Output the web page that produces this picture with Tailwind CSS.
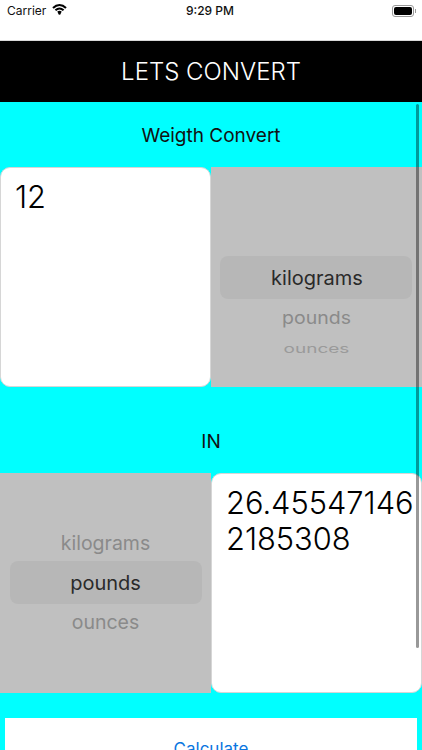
<!DOCTYPE html>
<html lang="en">

<head>
  <meta charset="UTF-8" />
  <meta name="viewport" content="width=device-width, initial-scale=1.0" />
  <title>Lets Convert</title>
  <script src="https://cdn.jsdelivr.net/npm/@tailwindcss/browser@4"></script>
</head>

<body class="bg-white font-['Inter',sans-serif] overflow-hidden">
  <div class="relative w-[422px] h-[750px] overflow-hidden bg-[#00ffff]">

    <!-- Status bar -->
    <div class="h-[41px] bg-white border-b border-[#d8d8d8]">
      <div class="relative flex items-center justify-between h-[21px] pl-[7px] pr-[6px]">
        <div class="flex items-center gap-[6px]">
          <span class="text-[12px] leading-none text-[#111]">Carrier</span>
          <svg class="w-[15px] h-[11px] -mt-[2px]" viewBox="0 0 15 11" fill="none" stroke="#000" stroke-width="2.1">
            <path d="M1 3.9C5 .2 10 .2 14 3.9" />
            <path d="M3.4 6.3c2.6-2.3 5.6-2.3 8.2 0" />
            <path d="M5.9 8.6c1-.9 2.2-.9 3.2 0" />
            <circle cx="7.5" cy="9.6" r="1.2" fill="#000" stroke="none" />
          </svg>
        </div>
        <span class="absolute left-[186px] text-[12px] font-medium leading-none text-[#111]">9:29 PM</span>
        <div class="flex items-center gap-px">
          <div class="w-[22px] h-[12px] rounded-[3px] border border-[#999] p-px">
            <div class="w-full h-full rounded-[2px] bg-black"></div>
          </div>
          <div class="w-px h-[4px] bg-[#999]"></div>
        </div>
      </div>
    </div>

    <!-- Title bar -->
    <div class="h-[61px] bg-black flex items-center justify-center">
      <h1 class="text-[24px] font-light leading-none text-white">LETS CONVERT</h1>
    </div>

    <h2 class="h-[65px] pt-[2px] flex items-center justify-center text-[19px] leading-none font-normal text-[#111]">Weigth Convert</h2>

    <!-- From row -->
    <div class="flex h-[220px]">
      <div class="w-[211px] h-full bg-white rounded-[10px] border border-[#d6d6d6] pl-[14px] pt-[11px] text-[30.8px] font-light leading-[36px] text-black">12</div>
      <div class="w-[211px] h-full bg-[#c0c0c0] flex flex-col items-center pt-[89px]">
        <div class="self-start ml-[9px] pl-[2px] w-[192px] h-[43px] shrink-0 rounded-[8px] bg-[#b7b7b7] flex items-center justify-center text-[20px] text-[#2a2a2a]">kilograms</div>
        <div class="mt-[8px] h-[24px] flex items-center scale-y-90 text-[19.5px] text-[#8a8a8a]">pounds</div>
        <div class="mt-[8px] h-[20px] flex items-center scale-y-[0.62] text-[19px] text-[#9a9a9a]">ounces</div>
      </div>
    </div>

    <h2 class="h-[86px] pt-[22px] flex items-center justify-center text-[19px] leading-none font-normal text-[#111]">IN</h2>

    <!-- To row -->
    <div class="flex h-[220px]">
      <div class="w-[211px] h-full bg-[#c0c0c0] flex flex-col items-center pt-[59px]">
        <div class="h-[24px] flex items-center text-[19.5px] text-[#8a8a8a]">kilograms</div>
        <div class="mt-[5px] w-[192px] h-[43px] shrink-0 rounded-[8px] bg-[#b7b7b7] flex items-center justify-center text-[20px] text-[#2a2a2a]">pounds</div>
        <div class="mt-[7px] h-[24px] flex items-center text-[19.5px] text-[#8a8a8a]">ounces</div>
      </div>
      <div class="w-[211px] h-full bg-white rounded-[10px] border border-[#d6d6d6] pl-[14px] pr-[4px] pt-[11px] text-[30.8px] font-light leading-[36px] text-black break-all">26.455471462185308</div>
    </div>

    <!-- Calculate button -->
    <div class="mt-[25px] mx-[5px] h-[60px] bg-white pt-[19px] text-center text-[17px] leading-[24px] text-[#0a76e0]">Calculate</div>

    <!-- Scroll indicator -->
    <div class="absolute left-[416px] top-[104px] w-[3px] h-[544px] rounded-full bg-black/40"></div>
  </div>
</body>

</html>
